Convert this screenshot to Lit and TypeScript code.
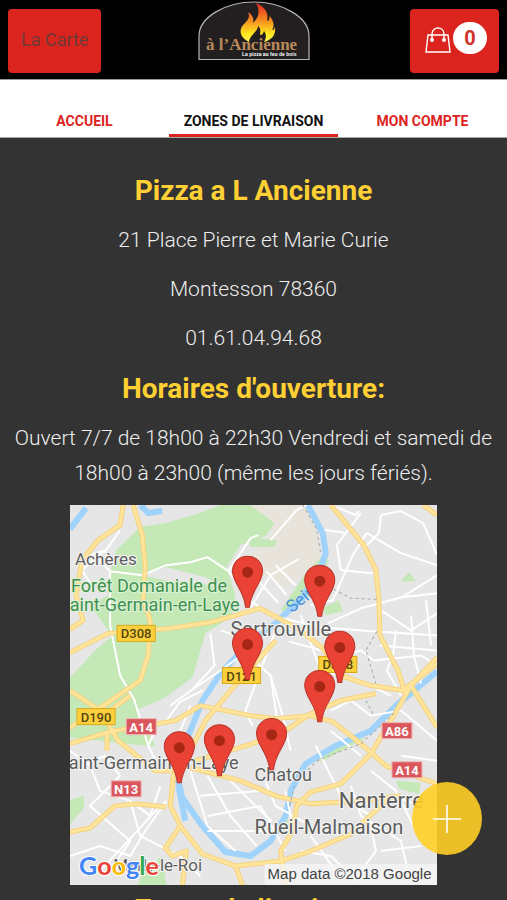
import { LitElement, html, svg, css } from "lit";
import { customElement } from "lit/decorators.js";

const PINS = [
  [177, 102],
  [249, 111],
  [177, 174],
  [269, 177],
  [249, 216],
  [201, 264],
  [149, 270],
  [109, 277],
];

const SHIELDS: [string, number, number, string][] = [
  ["D308", 47, 120, "d"],
  ["D121", 152, 162, "d"],
  ["D308", 248, 151, "d"],
  ["D190", 7, 203, "d"],
  ["A14", 56, 213, "a"],
  ["N13", 41, 275, "a"],
  ["A86", 311, 217, "a"],
  ["A14", 321, 256, "a"],
];

const GREENS = [
  "M46 45L70 22L95 18L130 8L150 0H179L196 12L204 19L195 31L170 40L156 62L165 90L160 112L135 128L122 172L95 192L66 205L85 240L75 240L0 232L0 172L26 144L42 130L20 100L38 90L42 60Z",
  "M179 33L206 35L204 42L179 42Z",
  "M210 105L235 68L254 48L258 56L238 90L218 110Z",
  "M253 102L268 95L272 106L254 110Z",
  "M330 76L338 67L345 76Z",
  "M325 275L350 277L348 288L328 283Z",
  "M0 294L14 290L14 302L0 318Z",
  "M72 366L92 350L96 379L68 379Z",
  "M240 252L270 236L295 232L250 256Z",
  "M210 325L216 308L218 316L212 330Z",
];

const STREETS = [
  "M50 25L36 45L26 52L40 66L72 70L96 60L120 57L137 52L158 66L180 33L188 30",
  "M26 52L12 65L20 78M36 45L20 50L10 70M40 66L40 120L50 170L64 194L78 240L88 260",
  "M158 66L179 95L200 110L250 122L300 126L366 130",
  "M200 35L226 5L236 0M179 104L200 70L228 54M196 66L216 90M188 76L208 98M205 60L225 80",
  "M260 0L285 10L288 6M254 25L275 28L290 8M270 65L302 68M270 65L266 40L275 28",
  "M296 28L282 50L262 95L240 100M296 28L330 48L366 60M310 10L308 28L296 40M310 10L330 6L352 18L366 50",
  "M257 118L290 103L331 92L366 88M331 92L366 70M310 105L340 125L366 108",
  "M150 125L165 130L178 150L200 170L212 210L220 245M205 125L190 165L175 205L182 220",
  "M100 200L122 184L150 165L178 145M140 128L144 160L122 184M218 136L270 150L290 145L303 155",
  "M325 125L322 150L316 165L330 190M340 110L343 150L350 178M309 140L366 145M303 155L350 150L366 160M355 95L360 140",
  "M0 245L20 260L30 285L60 295L80 310L90 280M12 260L35 250L50 270L20 300L60 335L40 365",
  "M96 215L110 196L132 185M110 225L120 200M78 240L85 225",
  "M0 350L30 340L60 350L75 325L96 295M30 365L90 300M60 295L70 330L110 350L130 370",
  "M120 265L137 320L165 345M137 270L160 310L186 340M150 265L185 300L201 315M130 290L190 285M137 310L190 300M137 325L201 325",
  "M200 170L206 210L195 240M230 110L250 165L290 175L320 190M255 170L255 205",
  "M260 205L280 195L300 210L330 205L366 235M260 225L290 250M245 240L270 290L300 310",
  "M300 265L325 285L345 325L366 345M280 280L290 310L330 335L340 379M320 290L366 305M330 250L366 255",
  "M230 345L260 350L290 379M240 330L265 365M300 320L305 345L280 379M310 345L350 340",
  "M215 345L190 300M195 276L205 300L240 320M222 320L215 285",
];

const ROADS = [
  "M53 0L50 20L28 35L12 55L6 90L13 115L0 124",
  "M63 0L72 30L75 60L73 95L80 115L78 150L70 175L48 190L0 222",
  "M0 147L38 128L100 123L140 117L172 108L189 103L212 115L230 125L252 143L270 170L300 180L332 185L366 158",
  "M260 0L293 40L305 65L308 95L309 130L327 165L335 190",
  "M352 0L366 10M0 185L30 205L48 235L85 265L104 265",
  "M0 238L40 226L105 215L130 200L180 210L205 213L240 210L262 216L290 238L315 260L366 278",
  "M366 152L340 180L320 215L300 248L270 278L240 286L226 300L222 325L210 345L215 379",
  "M160 185L135 215L120 245L103 270L100 300L110 320L132 348L165 360L210 355L240 345L280 328L320 290",
  "M0 326L20 322L45 300L66 298L96 301",
  "M110 320L95 342L102 350L116 345L112 379M165 360L172 379",
  "M120 262L170 275L205 290L240 298L290 295L330 290",
  "M125 255L179 239L215 225L240 208L270 195L305 188",
  "M37 226L37 245M160 185L205 135M340 180L366 222M60 190L40 205",
];

@customElement("zone-map")
export class ZoneMap extends LitElement {
  static styles = css`
    :host {
      display: block;
    }
    .map {
      display: block;
      width: 100%;
      height: auto;
      font-family: Roboto, sans-serif;
    }
    .land { fill: #e6e6e6; }
    .sand { fill: #e8e4dc; }
    .green { fill: #c5e8b7; }
    .river { fill: none; stroke: #9fd3fb; stroke-width: 6; stroke-linejoin: round; }
    .street { fill: none; stroke: #fff; stroke-width: 2; stroke-linejoin: round; }
    .edge { fill: none; stroke: #f6d27c; stroke-width: 5; stroke-linejoin: round; }
    .road { fill: none; stroke: #ffe49b; stroke-width: 3; stroke-linejoin: round; }
    .rail { fill: none; stroke: #a8a8a8; stroke-width: 1; stroke-dasharray: 3 3; }
    .town { fill: #5c5c5c; stroke: #f4f4f4; stroke-width: 2; paint-order: stroke; }
    .forest { fill: #3c9150; stroke: #dff2d8; stroke-width: 2; paint-order: stroke; }
    .water { fill: #4a8fd8; }
    .small { font-size: 17px; }
    .mid { font-size: 18px; }
    .large { font-size: 20px; }
    .huge { font-size: 22px; }
    .shield-d { fill: #fcd03c; stroke: #d9a91c; }
    .shield-a { fill: #d9575d; stroke: #f0b9bb; }
    .code { font-size: 13px; font-weight: 500; text-anchor: middle; fill: #54450f; }
    .code-a { font-weight: 700; fill: #fff; }
    .pin { fill: #ea4335; stroke: #b8352b; }
    .dot { fill: #a52714; }
    .credit-bg { fill: #f5f5f5; fill-opacity: 0.8; }
    .credit { font-size: 15px; fill: #444; font-family: "Liberation Sans", sans-serif; }
    .brand { font-family: Lato, sans-serif; font-size: 25px; font-weight: 700; stroke: #fff; stroke-width: 2; paint-order: stroke; }
    .b { fill: #4285f4; }
    .r { fill: #ea4335; }
    .y { fill: #fbbc05; }
    .g { fill: #34a853; }
  `;

  render() {
    return html`
      <svg class="map" viewBox="0 0 366 379" role="img" aria-label="Carte des zones de livraison">
        <rect class="land" width="366" height="379" />
        <path class="sand" d="M180 0H235L250 40L248 58L215 82L170 60L204 26Z" />
        ${GREENS.map((d) => svg`<path class="green" d=${d} />`)}
        <path class="land" d="M70 70L96 62L135 72L160 84L130 78L100 76Z" />
        <path class="river" d="M0 24L16 3M70 0L78 8L92 6M237 0L252 28L255 48L250 62L232 92L205 118L178 138L150 168L132 195L118 230L108 275L112 292L132 320L155 346L180 350L200 335L215 310L220 285L235 258L265 240L300 225L325 200L366 166" />
        <path class="river" d="M108 280L115 315" />
        ${STREETS.map((d) => svg`<path class="street" d=${d} />`)}
        ${ROADS.map((d) => svg`<path class="edge" d=${d} />`)}
        ${ROADS.map((d) => svg`<path class="road" d=${d} />`)}
        <path class="rail" d="M232 0L246 24L250 48M263 84L280 93L306 94M306 126L295 145L305 178M219 300L225 275L248 254L290 238L325 206M295 195L302 208" />

        <text class="town small" x="5" y="60">Achères</text>
        <text class="forest mid" x="1" y="87">Forêt Domaniale de</text>
        <text class="forest mid" x="-11" y="106">Saint-Germain-en-Laye</text>
        <text class="water small" transform="translate(221 108) rotate(-38)">Seine</text>
        <text class="town large" x="160" y="131">Sartrouville</text>
        <text class="town mid" x="-12" y="263">Saint-Germain-en-Laye</text>
        <text class="town mid" x="184" y="275">Chatou</text>
        <text class="town huge" x="268" y="302">Nanterre</text>
        <text class="town large" x="184" y="328">Rueil-Malmaison</text>
        <text class="town small" x="43" y="365">Marly-le-Roi</text>

        ${SHIELDS.map(
          ([code, x, y, kind]) => svg`
            <rect class="shield-${kind}" x=${x} y=${y} width=${kind === "d" ? 38 : 30} height="16" />
            <text class="code code-${kind}" x=${x + (kind === "d" ? 19 : 15)} y=${y + 13}>${code}</text>`
        )}
        ${PINS.map(
          ([x, y]) => svg`
            <g transform="translate(${x} ${y})">
              <path class="pin" d="M-2 0C-3 -16 -15 -25 -15 -36C-15 -45 -8 -51 0 -51C8 -51 15 -45 15 -36C15 -25 3 -16 2 0Z" />
              <circle class="dot" cy="-35" r="5.5" />
            </g>`
        )}
        <text class="brand" x="9" y="369"><tspan class="b">G</tspan><tspan class="r">o</tspan><tspan class="y">o</tspan><tspan class="b">g</tspan><tspan class="g">l</tspan><tspan class="r">e</tspan></text>
        <rect class="credit-bg" x="194" y="358" width="172" height="21" />
        <text class="credit" x="197" y="373">Map data ©2018 Google</text>
      </svg>
    `;
  }
}

@customElement("app-root")
export class AppRoot extends LitElement {
  static styles = css`
    :host {
      display: block;
      min-height: 100vh;
      background: #333;
      color: #eee;
      font-family: Roboto, sans-serif;
    }
    .page {
      height: 100vh;
      overflow: hidden;
    }
    .bar {
      display: grid;
      grid-template-columns: 1fr auto 1fr;
      align-items: start;
      height: 79px;
      padding: 0 8px;
      background: #000;
      border-bottom: 1px solid #999;
    }
    .btn {
      height: 64px;
      margin-top: 9px;
      border: 0;
      border-radius: 4px;
      background: #dc241f;
      font-family: inherit;
      font-size: 18px;
    }
    .menu {
      justify-self: start;
      padding: 0 13px 4px;
      color: #6e3a36;
    }
    .cart {
      display: flex;
      align-items: center;
      justify-self: end;
      gap: 2px;
      padding: 0 12px 6px 15px;
    }
    .bag {
      width: 26px;
      height: 28px;
      margin-top: 4px;
      fill: none;
      stroke: #fff;
      stroke-width: 1.4;
    }
    .knob { fill: #fff; stroke: none; }
    .count {
      width: 34px;
      border-radius: 16px;
      background: #fff;
      color: #d2322d;
      font-size: 20px;
      font-weight: 700;
      line-height: 32px;
    }
    .logo {
      display: block;
      width: 112px;
      height: 60px;
      margin-top: 1px;
    }
    .dome { fill: #231f20; stroke: #b5b5b5; stroke-width: 1.2; }
    .name { font-family: "Liberation Serif", serif; font-weight: 700; font-size: 17px; fill: #b98a5a; }
    .motto { font-family: "Liberation Sans", sans-serif; font-weight: 700; font-size: 5px; fill: #fff; }
    .tabs {
      display: grid;
      grid-template-columns: repeat(3, 1fr);
      align-items: end;
      height: 58px;
      background: #fff;
      border-bottom: 1px solid #aaa;
      box-sizing: border-box;
    }
    .tab {
      padding-bottom: 4px;
      border-bottom: 3px solid transparent;
      color: #dc241f;
      font-size: 14px;
      font-weight: 700;
      line-height: 18px;
      text-align: center;
      text-decoration: none;
    }
    .current {
      border-color: #dc241f;
      color: #111;
    }
    .info {
      padding: 34px 12px 0;
      text-align: center;
    }
    .title {
      margin: 0 0 14px;
      color: #ffd034;
      font-size: 28px;
      font-weight: 700;
      line-height: 37px;
    }
    .line {
      margin: 0 0 14px;
      font-size: 21px;
      font-weight: 300;
      line-height: 35px;
    }
    .zones {
      width: 76%;
      margin: 0 auto 6px;
    }
    .add {
      position: fixed;
      right: 25px;
      bottom: 45px;
      width: 70px;
      height: 73px;
      padding: 0;
      border: 0;
      border-radius: 50%;
      background: rgba(255, 206, 38, 0.9);
    }
    .plus {
      display: block;
      width: 30px;
      height: 30px;
      margin: 0 auto;
      stroke: #fff;
      stroke-width: 1.6;
    }
  `;

  render() {
    return html`
      <div class="page">
        <header class="bar">
          <button class="btn menu">La Carte</button>
          <svg class="logo" viewBox="0 0 112 60" role="img" aria-label="à l'Ancienne">
            <defs>
              <linearGradient id="fire" x1="0" y1="0" x2="0" y2="1">
                <stop offset="0" stop-color="#e5261f" />
                <stop offset="0.4" stop-color="#f58220" />
                <stop offset="0.8" stop-color="#ffe81f" />
                <stop offset="1" stop-color="#fff35a" />
              </linearGradient>
            </defs>
            <path class="dome" d="M1 58.500V35C1 16 28 1 56 1S111 16 111 35V58.500Z" />
            <path fill="url(#fire)" d="M51 41C40 35 41 27 47 22C51 18 52 15 50 11C55 14 56 18 55 22C60 17 63 11 58 2C67 6 71 12 69 20C72 19 72 16 71 14C77 21 76 26 74 29C76 29 76 28 77 26C78 34 74 39 66 41C69 36 68 33 66 30C65 33 64 34 62 34C63 29 62 27 60 25C60 31 52 33 51 41Z" />
            <text class="name" x="8" y="49">à l’Ancienne</text>
            <text class="motto" x="44" y="55">La pizza au feu de bois</text>
          </svg>
          <button class="btn cart" aria-label="Panier">
            <svg class="bag" viewBox="0 0 26 28" aria-hidden="true">
              <path d="M3 9H23L25 26H1Z" />
              <path d="M7 14V8C7 0 19 0 19 8V14" />
              <circle class="knob" cx="7" cy="14" r="2" />
              <circle class="knob" cx="19" cy="14" r="2" />
            </svg>
            <span class="count">0</span>
          </button>
        </header>
        <nav class="tabs">
          <a class="tab" href="#accueil">ACCUEIL</a>
          <a class="tab current" href="#zones" aria-current="page">ZONES DE LIVRAISON</a>
          <a class="tab" href="#compte">MON COMPTE</a>
        </nav>
        <main class="info">
          <h2 class="title">Pizza a L Ancienne</h2>
          <p class="line">21 Place Pierre et Marie Curie</p>
          <p class="line">Montesson 78360</p>
          <p class="line">01.61.04.94.68</p>
          <h2 class="title">Horaires d'ouverture:</h2>
          <p class="line">Ouvert 7/7 de 18h00 à 22h30 Vendredi et samedi de 18h00 à 23h00 (même les jours fériés).</p>
          <zone-map class="zones"></zone-map>
          <h2 class="title">Zones de livraison:</h2>
        </main>
        <button class="add" aria-label="Ajouter">
          <svg class="plus" viewBox="0 0 30 30" aria-hidden="true"><path d="M15 1V29M1 15H29" /></svg>
        </button>
      </div>
    `;
  }
}
